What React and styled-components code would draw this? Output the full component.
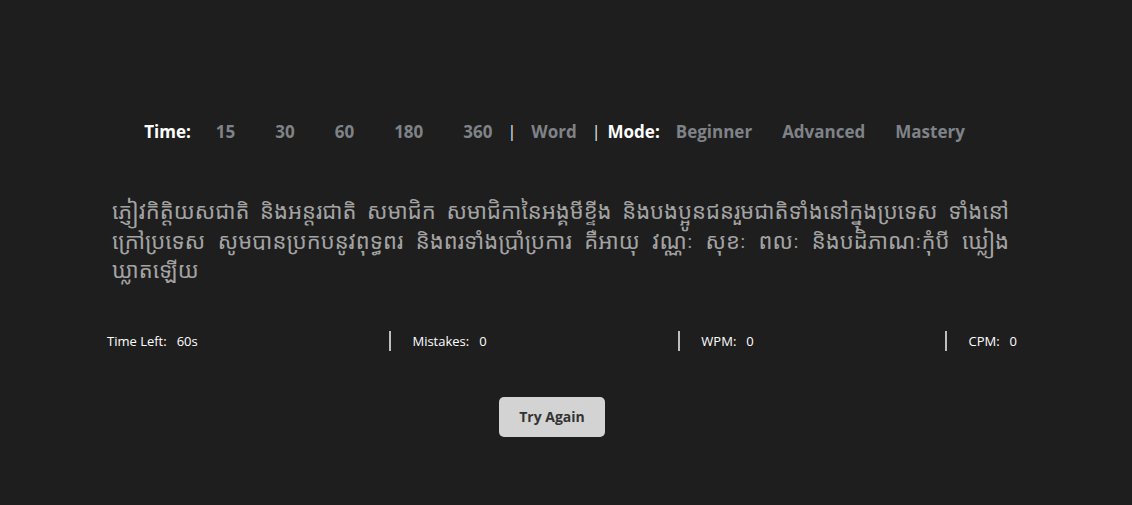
import React from 'react';
import styled, { createGlobalStyle } from 'styled-components';

const GlobalStyle = createGlobalStyle`
    html, body {
        margin: 0;
        padding: 0;
        background-color: #1e1e1e;
        font-family: "Open Sans", "Noto Sans", sans-serif;
    }
`;

const TIMES = ['15', '30', '60', '180', '360'];
const MODES = ['Beginner', 'Advanced', 'Mastery'];
const TEXT = 'ភ្ញៀវកិត្តិយសជាតិ និងអន្តរជាតិ សមាជិក សមាជិកានៃអង្គមីខ្ទីង និងបងប្អូនជនរួមជាតិទាំងនៅក្នុងប្រទេស ទាំងនៅក្រៅប្រទេស សូមបានប្រកបនូវពុទ្ធពរ និងពរទាំងប្រាំប្រការ គឺអាយុ វណ្ណៈ សុខៈ ពលៈ និងបដិភាណៈកុំបី ឃ្លៀង\u200B';
const TAIL = 'ឃ្លាតឡើយ';

const STATS = [
    { label: 'Time Left:', value: '60s' },
    { label: 'Mistakes:', value: '0' },
    { label: 'WPM:', value: '0' },
    { label: 'CPM:', value: '0' },
];

export default function App() {
    return (
        <Page>
            <GlobalStyle />
            <Main>
                <Options>
                    <Label>Time:</Label>
                    {TIMES.map((t) => (
                        <TimeButton key={t}>{t}</TimeButton>
                    ))}
                    <Divider>|</Divider>
                    <WordButton>Word</WordButton>
                    <Divider>|</Divider>
                    <Label $mode>Mode:</Label>
                    {MODES.map((m) => (
                        <ModeButton key={m}>{m}</ModeButton>
                    ))}
                </Options>
                <Passage>
                    {TEXT}
                    <NoBreak>{TAIL}</NoBreak>
                </Passage>
                <Stats>
                    {STATS.map((s, i) => (
                        <Stat key={s.label} $first={i === 0}>
                            {s.label}
                            <StatValue>{s.value}</StatValue>
                        </Stat>
                    ))}
                </Stats>
                <ButtonRow>
                    <TryAgain>Try Again</TryAgain>
                </ButtonRow>
            </Main>
        </Page>
    );
}

const Page = styled.div`
    width: 100%;
    min-height: 505px;
    background-color: #1e1e1e;
    overflow: hidden;
`;
const Main = styled.div`
    width: 918px;
    margin: 0 auto;
    padding-top: 117px;
    display: flex;
    flex-direction: column;
`;
const Options = styled.div`
    display: flex;
    align-items: center;
    justify-content: center;
    padding-right: 23px;
    height: 28px;
    font-size: 17px;
    font-weight: 700;
`;
const Label = styled.span`
    color: #ffffff;
    margin-right: ${(p) => (p.$mode ? '16px' : '5px')};
    margin-left: ${(p) => (p.$mode ? '11px' : '0')};
`;
const OptionButton = styled.button`
    background: none;
    border: 0;
    outline: 0;
    font-family: inherit;
    font-size: 17px;
    font-weight: 700;
    color: #7f8388;
    cursor: pointer;
    padding: 0;
`;
const TimeButton = styled(OptionButton)`
    padding: 0 20px;
`;
const WordButton = styled(OptionButton)`
    padding: 0 20px 0 19px;
`;
const ModeButton = styled(OptionButton)`
    margin-right: 30px;
    &:last-child {
        margin-right: 0;
    }
`;
const Divider = styled.span`
    color: #e6eef8;
    font-weight: 400;
    font-size: 16px;
    margin: 0 -4px 0 -5px;
`;
const Passage = styled.p`
    margin: 51px 0 0;
    padding: 0 16px 0 5px;
    font-family: "Noto Sans Khmer", "Khmer OS", "Noto Sans", sans-serif;
    font-size: 22px;
    line-height: 29.5px;
    color: #a3a3a3;
    text-align: justify;
`;
const NoBreak = styled.span`
    white-space: nowrap;
`;
const Stats = styled.div`
    display: flex;
    justify-content: space-between;
    align-items: center;
    margin-top: 46px;
    padding-right: 8px;
    height: 20px;
`;
const Stat = styled.div`
    display: flex;
    align-items: center;
    height: 20px;
    font-size: 13px;
    color: #ffffff;
    border-left: ${(p) => (p.$first ? '0' : '2px solid #bdbdbd')};
    padding-left: ${(p) => (p.$first ? '0' : '21px')};
`;
const StatValue = styled.span`
    margin-left: 10px;
`;
const ButtonRow = styled.div`
    display: flex;
    justify-content: center;
    padding-right: 28px;
    margin-top: 46px;
`;
const TryAgain = styled.button`
    width: 106px;
    height: 40px;
    border: 0;
    border-radius: 5px;
    background-color: #d3d3d3;
    color: #333333;
    font-family: "Open Sans", sans-serif;
    font-size: 14px;
    font-weight: 700;
    cursor: pointer;
`;
